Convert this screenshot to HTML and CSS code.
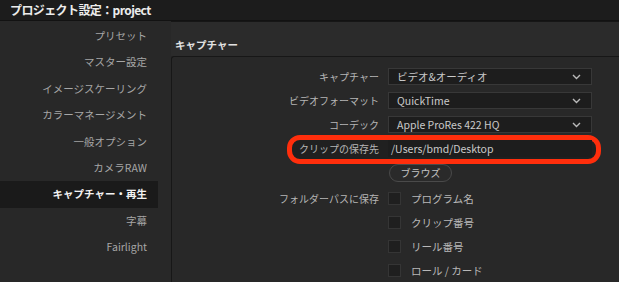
FILE: index.html
```html
<!DOCTYPE html>
<html lang="ja">
<head>
<meta charset="utf-8">
<title>プロジェクト設定</title>
<link rel="stylesheet" href="styles.css">
</head>
<body>
<div class="titlebar">プロジェクト設定：project</div>
<div class="layout">
  <nav class="sidebar">
    <div class="nav-item">プリセット</div>
    <div class="nav-item">マスター設定</div>
    <div class="nav-item">イメージスケーリング</div>
    <div class="nav-item">カラーマネージメント</div>
    <div class="nav-item">一般オプション</div>
    <div class="nav-item">カメラRAW</div>
    <div class="nav-item active">キャプチャー・再生</div>
    <div class="nav-item">字幕</div>
    <div class="nav-item">Fairlight</div>
  </nav>
  <main class="main">
    <div class="stub"></div>
    <div class="section-title">キャプチャー</div>
    <div class="panel">
      <div class="highlight"></div>
      <div class="row">
        <div class="label">キャプチャー</div>
        <div class="select"><span>ビデオ&amp;オーディオ</span><svg class="chev" width="9" height="6" viewBox="0 0 9 6"><path d="M1 1l3.5 3.5L8 1" fill="none" stroke="#b9b9b9" stroke-width="1.4"/></svg></div>
      </div>
      <div class="row">
        <div class="label">ビデオフォーマット</div>
        <div class="select"><span>QuickTime</span><svg class="chev" width="9" height="6" viewBox="0 0 9 6"><path d="M1 1l3.5 3.5L8 1" fill="none" stroke="#b9b9b9" stroke-width="1.4"/></svg></div>
      </div>
      <div class="row">
        <div class="label">コーデック</div>
        <div class="select"><span>Apple ProRes 422 HQ</span><svg class="chev" width="9" height="6" viewBox="0 0 9 6"><path d="M1 1l3.5 3.5L8 1" fill="none" stroke="#b9b9b9" stroke-width="1.4"/></svg></div>
      </div>
      <div class="row">
        <div class="label">クリップの保存先</div>
        <div class="select input"><span>/Users/bmd/Desktop</span></div>
      </div>
      <div class="row browse-row">
        <div class="label"></div>
        <div class="control"><button class="browse">ブラウズ</button></div>
      </div>
      <div class="row check-row">
        <div class="label">フォルダーパスに保存</div>
        <div class="control"><span class="box"></span><span class="check-label">プログラム名</span></div>
      </div>
      <div class="row check-row">
        <div class="label"></div>
        <div class="control"><span class="box"></span><span class="check-label">クリップ番号</span></div>
      </div>
      <div class="row check-row">
        <div class="label"></div>
        <div class="control"><span class="box"></span><span class="check-label">リール番号</span></div>
      </div>
      <div class="row check-row">
        <div class="label"></div>
        <div class="control"><span class="box"></span><span class="check-label">ロール / カード</span></div>
      </div>
    </div>
  </main>
</div>
</body>
</html>
```
FILE: styles.css
```css
* { box-sizing: border-box; }
html, body { margin: 0; padding: 0; }
body {
  width: 619px;
  height: 282px;
  overflow: hidden;
  background: #282828;
  font-family: "Noto Sans CJK JP", "Noto Sans", sans-serif;
  color: #b4b4b4;
}
.titlebar {
  height: 21px;
  background: #1c1c1c;
  border-bottom: 1px solid #121212;
  padding-left: 10px;
  font-size: 12px;
  font-weight: 700;
  color: #ececec;
  line-height: 20px;
  letter-spacing: -0.6px;
}
.layout {
  display: flex;
  height: 261px;
}
.sidebar {
  width: 158px;
  flex: none;
  padding-top: 2px;
}
.nav-item {
  height: 26.4px;
  line-height: 26.4px;
  text-align: right;
  padding-right: 11px;
  font-size: 10.5px;
  color: #a6a6a6;
}
.nav-item.active {
  background: #1a1a1a;
  color: #f2f2f2;
  font-weight: 700;
}
.main {
  flex: 1;
  padding-left: 13px;
  display: flex;
  flex-direction: column;
}
.stub {
  height: 4px;
  background: #2b2b2b;
  border-left: 1px solid #161616;
  border-bottom: 1px solid #161616;
  border-bottom-left-radius: 4px;
}
.section-title {
  height: 34px;
  padding-left: 4px;
  padding-top: 11px;
  line-height: 23px;
  font-size: 10.5px;
  font-weight: 700;
  color: #e2e2e2;
  background: #2b2b2b;
}
.panel {
  position: relative;
  flex: 1;
  background: #282828;
  border-top: 1px solid #171717;
  border-left: 1px solid #171717;
  border-top-left-radius: 3px;
  padding-top: 11px;
}
.highlight {
  position: absolute;
  left: 115px;
  top: 78px;
  width: 314px;
  height: 29px;
  border: 5px solid #ff2e0c;
  border-radius: 13px;
  background: #202020;
}
.row {
  position: relative;
  display: flex;
  align-items: center;
  height: 17px;
  margin-bottom: 7px;
}
.label {
  width: 207px;
  flex: none;
  text-align: right;
  font-size: 10px;
  color: #b6b6b6;
  margin-right: 9px;
  white-space: nowrap;
}
.select {
  width: 204px;
  height: 17px;
  background: #1d1d1d;
  border: 1px solid #383838;
  display: flex;
  align-items: center;
  justify-content: space-between;
  padding: 0 10px 0 8px;
  font-size: 10.5px;
  color: #cacaca;
}
.select.input {
  padding-left: 2px;
  border-color: #1d1d1d;
}
.chev { display: block; }
.browse-row {
  height: 18px;
  margin-top: 2px;
  margin-bottom: 4px;
}
.control {
  display: flex;
  align-items: center;
}
.browse {
  margin-left: 1px;
  width: 63px;
  height: 18px;
  border: 1px solid #4a4a4a;
  border-radius: 9px;
  background: #2a2a2a;
  color: #c4c4c4;
  font-family: inherit;
  font-size: 10px;
  padding: 0;
  line-height: 16px;
}
.check-row {
  height: 24px;
  margin-bottom: 0;
}
.box {
  width: 13px;
  height: 13px;
  background: #1f1f1f;
  border: 1px solid #353535;
  margin-right: 10px;
}
.check-label {
  font-size: 10.5px;
  color: #b8b8b8;
}
```
